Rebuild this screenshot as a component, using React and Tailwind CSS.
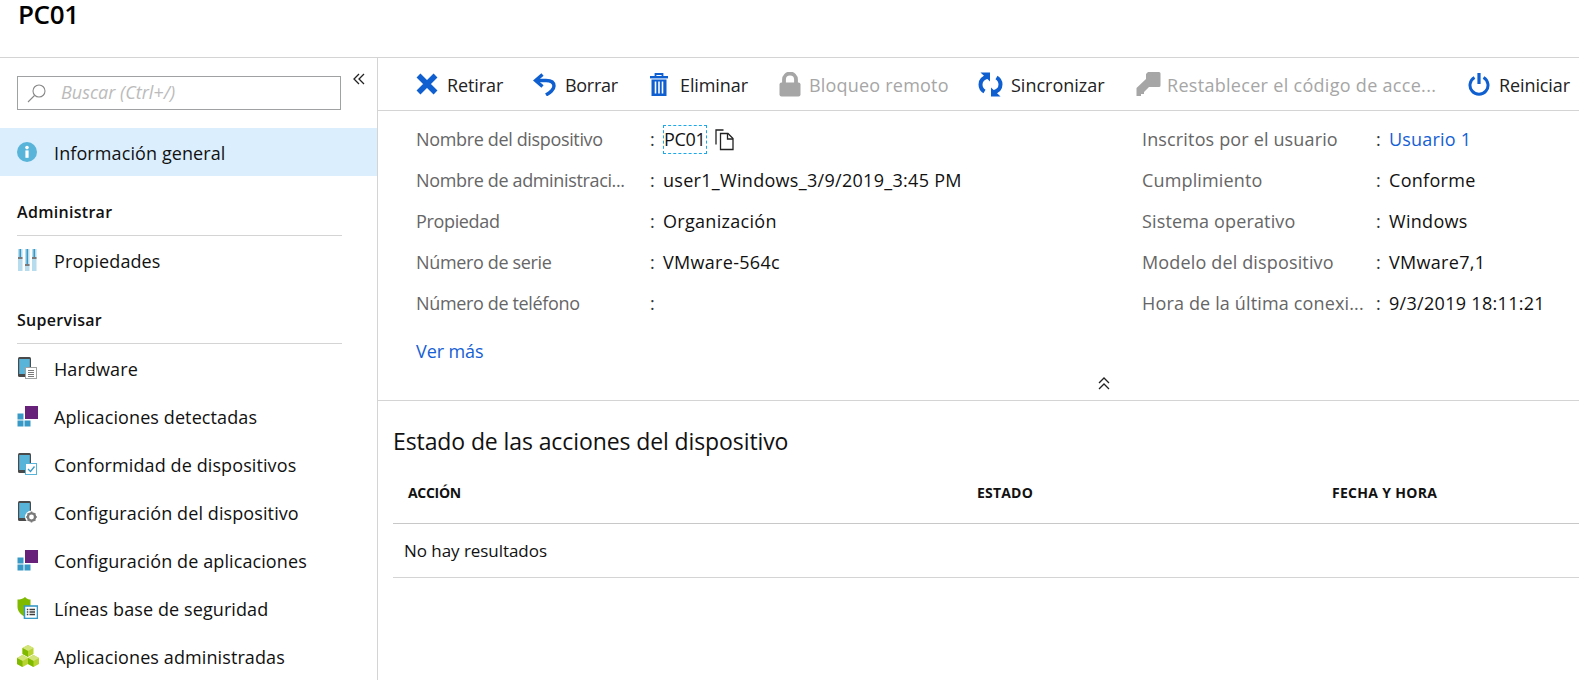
const font = { fontFamily: '"Open Sans", "Noto Sans", sans-serif' };

const IconInfo = () => (
  <svg width="20" height="20" viewBox="0 0 20 20">
    <circle cx="10" cy="10" r="10" fill="#59b4d9" />
    <rect x="8.4" y="8.4" width="3.2" height="7.4" fill="#fff" />
    <circle cx="10" cy="5.6" r="1.8" fill="#fff" />
  </svg>
);

const IconProps = () => (
  <svg width="20" height="22" viewBox="0 0 20 22">
    <rect x="1" y="0" width="4.5" height="22" fill="#b6dcee" />
    <rect x="8" y="0" width="4.5" height="22" fill="#b6dcee" />
    <rect x="15" y="0" width="4.5" height="22" fill="#b6dcee" />
    <rect x="2.5" y="0" width="1.5" height="8" fill="#3999c6" />
    <rect x="9.500" y="0" width="1.5" height="15" fill="#3999c6" />
    <rect x="16.500" y="0" width="1.5" height="8" fill="#3999c6" />
    <rect x="1" y="8" width="4.500" height="2" fill="#7a7a7a" />
    <rect x="8" y="15" width="4.500" height="2" fill="#7a7a7a" />
    <rect x="15" y="8" width="4.500" height="2" fill="#7a7a7a" />
  </svg>
);

const Phone = () => (
  <>
    <rect x="1" y="0" width="13" height="20" rx="1.5" fill="#4a4a4a" />
    <rect x="2.200" y="2" width="10.600" height="15" fill="#59b4d9" />
  </>
);

const IconHardware = () => (
  <svg width="20" height="22" viewBox="0 0 20 22">
    <Phone />
    <rect x="8.500" y="10.500" width="11" height="11" fill="#fff" stroke="#a0a1a2" />
    <path d="M11 13.500h6M11 15.500h6M11 17.500h6M11 19.500h6" stroke="#7a7a7a" />
  </svg>
);

const IconCheck = () => (
  <svg width="20" height="22" viewBox="0 0 20 22">
    <Phone />
    <rect x="8.500" y="10.500" width="11" height="11" fill="#fff" stroke="#59b4d9" />
    <path d="M11 16l2.500 2.500 4-5" fill="none" stroke="#3999c6" strokeWidth="1.300" />
  </svg>
);

const IconGear = () => (
  <svg width="21" height="22" viewBox="0 0 21 22">
    <Phone />
    <circle cx="14.500" cy="16" r="6.500" fill="#fff" />
    <circle cx="14.500" cy="16" r="3.600" fill="none" stroke="#7a7a7a" strokeWidth="2.400" />
    <path d="M14.500 10.600v2M14.500 19.400v2M9.100 16h2M17.900 16h2M10.700 12.200l1.400 1.400M16.900 18.400l1.400 1.400M10.700 19.800l1.400-1.400M16.900 13.600l1.400-1.400" stroke="#7a7a7a" strokeWidth="1.600" />
  </svg>
);

const IconApps = () => (
  <svg width="21" height="21" viewBox="0 0 21 21">
    <rect x="8" y="0" width="13" height="13" fill="#68217a" />
    <rect x="0.5" y="7.5" width="6" height="6" fill="#3999c6" />
    <rect x="0.5" y="14.5" width="6" height="6" fill="#3999c6" />
    <rect x="7.5" y="14.5" width="6" height="6" fill="#3999c6" />
  </svg>
);

const IconShield = () => (
  <svg width="21" height="22" viewBox="0 0 21 22">
    <path d="M8 0C6 1.800 3 2.600 0.500 2.600V10c0 4.500 3.500 7.500 7.500 10 2-1.200 4-2.600 5.500-4.400V2.600C11.500 2.600 10 1.800 8 0z" fill="#7fba00" />
    <rect x="7.500" y="9" width="13" height="12.500" fill="#fff" stroke="#3999c6" strokeWidth="1.600" />
    <path d="M9.800 12.500h1.500M9.800 15h1.500M9.800 17.500h1.500M12.500 12.500h5.500M12.500 15h5.500M12.500 17.500h5.500" stroke="#3e3e3e" strokeWidth="1.300" />
  </svg>
);

const Cube = ({ x, y }) => (
  <g transform={`translate(${x} ${y})`}>
    <path d="M5.500 0L11 3v6L5.500 12 0 9V3z" fill="#b8d432" />
    <path d="M0 3l5.500 3L11 3 5.500 0z" fill="#d3e57a" />
    <path d="M5.500 6v6L0 9V3z" fill="#7fba00" />
  </g>
);

const IconCubes = () => (
  <svg width="22" height="22" viewBox="0 0 22 22">
    <Cube x={5.5} y={0} />
    <Cube x={0} y={10} />
    <Cube x={11} y={10} />
  </svg>
);

const IconX = () => (
  <svg width="22" height="22" viewBox="0 0 22 22">
    <path d="M2.500 2.500l17 17M19.500 2.500l-17 17" stroke="#0f5fd0" strokeWidth="5.500" />
  </svg>
);

const IconUndo = () => (
  <svg width="23" height="23" viewBox="0 0 23 23" fill="none" stroke="#0f5fd0" strokeWidth="3.400">
    <path d="M9.500 1.500L2.500 7.500l7 6" />
    <path d="M3 7.500h10c4.500 0 8 1.500 8 5.500 0 4-4 6.500-8 9" />
  </svg>
);

const IconTrash = () => (
  <svg width="18" height="23" viewBox="0 0 18 23">
    <path d="M5.500 3V1h7v2" fill="none" stroke="#0f5fd0" strokeWidth="1.800" />
    <rect x="0" y="3" width="18" height="2.400" fill="#0f5fd0" />
    <path d="M1.500 6.500h15V23h-15z" fill="#0f5fd0" />
    <path d="M5.500 8.500v12M9 8.500v12M12.500 8.500v12" stroke="#fff" strokeWidth="1.600" />
  </svg>
);

const IconLock = () => (
  <svg width="22" height="25" viewBox="0 0 22 25">
    <path d="M5 11V7.500a6 6 0 0 1 12 0V11" fill="none" stroke="#a6a6a6" strokeWidth="3.800" />
    <rect x="0.500" y="10.500" width="21" height="14" rx="2" fill="#a6a6a6" />
  </svg>
);

const IconSync = () => (
  <svg width="25" height="25" viewBox="0 0 25 25">
    <path d="M10 4.500C6 5.500 2.500 8 2.500 12.500c0 3 1.500 5.500 4 7" fill="none" stroke="#0f5fd0" strokeWidth="4" />
    <path d="M2.500 0.500h9.500v9z" fill="#0f5fd0" />
    <path d="M15 20.500c4-1 7.500-3.500 7.500-8 0-3-1.500-5.500-4-7" fill="none" stroke="#0f5fd0" strokeWidth="4" />
    <path d="M22.500 24.500H13v-9z" fill="#0f5fd0" />
  </svg>
);

const IconKey = () => (
  <svg width="26" height="25" viewBox="0 0 26 25">
    <path d="M13 0h11a1.500 1.500 0 0 1 1.500 1.500v12a1.500 1.500 0 0 1-1.500 1.500H14l-5 5v2H6v2H1.500v-8L11 7V2z" fill="#a6a6a6" />
  </svg>
);

const IconPower = () => (
  <svg width="22" height="24" viewBox="0 0 22 24">
    <path d="M6.500 5.500a9 9 0 1 0 9 0" fill="none" stroke="#0f5fd0" strokeWidth="3" />
    <path d="M11 1v11" stroke="#0f5fd0" strokeWidth="3.200" />
  </svg>
);

const IconCopy = () => (
  <svg width="20" height="22" viewBox="0 0 20 22" fill="none" stroke="#222" strokeWidth="1.300">
    <path d="M1 15.500V1h7.500" />
    <path d="M5.500 4.500h7.500l5 5V20.500H5.500z" fill="#fff" />
    <path d="M12.500 4.500v5.500h5.500" />
  </svg>
);

const actions = [
  { label: "Retirar", icon: <IconX />, box: "w-[117px]", slot: "w-[31px]", track: "tracking-[-0.1px]" },
  { label: "Borrar", icon: <IconUndo />, box: "w-[117px]", slot: "w-[32px]", track: "tracking-[-0.3px]" },
  { label: "Eliminar", icon: <IconTrash />, box: "w-[129px]", slot: "w-[30px]", track: "tracking-[-0.1px]" },
  { label: "Bloqueo remoto", icon: <IconLock />, box: "w-[199px]", slot: "w-[30px]", track: "tracking-[0.2px]", off: true },
  { label: "Sincronizar", icon: <IconSync />, box: "w-[157px]", slot: "w-[33px]", track: "tracking-[0px]" },
  { label: "Restablecer el código de acce...", icon: <IconKey />, box: "w-[333px]", slot: "w-[32px]", track: "tracking-[0.3px]", off: true },
  { label: "Reiniciar", icon: <IconPower />, box: "w-[111px]", slot: "w-[31px]", track: "tracking-[-0.1px]" },
];

const leftRows = [
  ["Nombre del dispositivo", "PC01"],
  ["Nombre de administraci...", "user1_Windows_3/9/2019_3:45 PM"],
  ["Propiedad", "Organización"],
  ["Número de serie", "VMware-564c"],
  ["Número de teléfono", ""],
];

const rightRows = [
  ["Inscritos por el usuario", "Usuario 1"],
  ["Cumplimiento", "Conforme"],
  ["Sistema operativo", "Windows"],
  ["Modelo del dispositivo", "VMware7,1"],
  ["Hora de la última conexi...", "9/3/2019 18:11:21"],
];

const supervise = [
  ["Hardware", <IconHardware />],
  ["Aplicaciones detectadas", <IconApps />],
  ["Conformidad de dispositivos", <IconCheck />],
  ["Configuración del dispositivo", <IconGear />],
  ["Configuración de aplicaciones", <IconApps />],
  ["Líneas base de seguridad", <IconShield />],
  ["Aplicaciones administradas", <IconCubes />],
];

const NavItem = ({ label, icon }) => (
  <div className="flex h-12 items-center pl-[17px] text-[18px] tracking-[0.1px] text-[#111]">
    <span className="flex w-[37px] shrink-0">{icon}</span>
    <span className="pt-[2px]">{label}</span>
  </div>
);

const SectionTitle = ({ children }) => (
  <div className="mx-[17px] h-[60px] w-[325px] border-b border-[#d4d4d4] pt-[24px] text-[16px] leading-[24px] font-semibold tracking-[0.3px] text-[#111]">
    {children}
  </div>
);

const DetailRow = ({ label, value, labelTrack }) => {
  let valueNode = <span className="tracking-[0.3px] text-[#111]">{value}</span>;
  if (value === "PC01") {
    valueNode = (
      <span className="flex items-center gap-[8px]">
        <span className="border border-dashed border-[#19a8e8] tracking-[-0.3px] text-[#111]">PC01</span>
        <IconCopy />
      </span>
    );
  }
  if (value === "Usuario 1") {
    valueNode = <span className="tracking-[0.2px] text-[#1560d4]">{value}</span>;
  }
  return (
    <div className="flex h-[41px] items-center">
      <span className={`w-[234px] shrink-0 text-[#666] ${labelTrack}`}>{label}</span>
      <span className="w-[13px] shrink-0 text-[#333]">:</span>
      {valueNode}
    </div>
  );
};

export default function App() {
  return (
    <div className="h-[680px] w-[1579px] overflow-hidden bg-white" style={font}>
      <div className="h-[58px] border-b border-[#d4d4d4] pl-[18px]">
        <h1 className="text-[26px] leading-[29px] font-semibold tracking-[-0.4px] text-[#000]">PC01</h1>
      </div>

      <div className="flex h-[622px]">
        <aside className="w-[378px] shrink-0 border-r border-[#d4d4d4]">
          <div className="relative h-[70px] pt-[18px] pl-[17px]">
            <div className="flex h-[34px] w-[324px] items-center border border-[#a0a1a2] bg-white">
              <svg className="ml-[9px]" width="20" height="20" viewBox="0 0 20 20" fill="none" stroke="#888" strokeWidth="1.100">
                <circle cx="12" cy="8" r="6" />
                <path d="M7.500 12.500L1 19" />
              </svg>
              <span className="mb-[2px] ml-[14px] text-[18px] text-[#bbb] italic">Buscar (Ctrl+/)</span>
            </div>
            <svg className="absolute top-[15px] left-[353px]" width="12" height="12" viewBox="0 0 12 12" fill="none" stroke="#222" strokeWidth="1.300">
              <path d="M6 1L1 6l5 5M11 1L6 6l5 5" />
            </svg>
          </div>

          <div className="flex h-[48px] items-center bg-[#dbeefd] pl-[17px] text-[18px] tracking-[0.1px] text-[#111]">
            <span className="flex w-[37px]">
              <IconInfo />
            </span>
            <span className="pt-[2px]">Información general</span>
          </div>

          <SectionTitle>Administrar</SectionTitle>
          <NavItem label="Propiedades" icon={<IconProps />} />

          <SectionTitle>Supervisar</SectionTitle>
          {supervise.map(([label, icon]) => (
            <NavItem key={label} label={label} icon={icon} />
          ))}
        </aside>

        <main className="min-w-0 flex-1">
          <div className="flex h-[53px] items-center border-b border-[#d4d4d4] pl-[38px] text-[18px] whitespace-nowrap">
            {actions.map((a) => (
              <div key={a.label} className={`flex shrink-0 items-center ${a.box} ${a.track} ${a.off ? "text-[#a6a6a6]" : "text-[#222]"}`}>
                <span className={`flex shrink-0 ${a.slot}`}>{a.icon}</span>
                <span className="pt-[2px]">{a.label}</span>
              </div>
            ))}
          </div>

          <div className="h-[290px] border-b border-[#d4d4d4]">
            <div className="flex pt-[8px] pl-[38px] text-[18px]">
              <div className="w-[726px] shrink-0">
                {leftRows.map(([label, value]) => (
                  <DetailRow key={label} label={label} value={value} labelTrack="tracking-[-0.35px]" />
                ))}
              </div>
              <div>
                {rightRows.map(([label, value]) => (
                  <DetailRow key={label} label={label} value={value} labelTrack="tracking-[0.15px]" />
                ))}
              </div>
            </div>
            <div className="mt-[14px] pl-[38px] text-[18px] tracking-[-0.1px] text-[#1560d4]">Ver más</div>
            <div className="mt-[11px] pl-[720px]">
              <svg width="12" height="14" viewBox="0 0 12 14" fill="none" stroke="#222" strokeWidth="1.300">
                <path d="M1 7l5-5 5 5M1 13l5-5 5 5" />
              </svg>
            </div>
          </div>

          <div className="pl-[15px]">
            <h2 className="mt-[25px] text-[23px] leading-[30px] tracking-[-0.1px] text-[#111]">Estado de las acciones del dispositivo</h2>
            <div className="mt-[17px] flex h-[51px] items-center border-b border-[#c8c8c8] pb-[12px] text-[14px] font-bold text-[#111]">
              <span className="w-[584px] pl-[15px] tracking-[-0.3px]">ACCIÓN</span>
              <span className="w-[355px] tracking-[0.2px]">ESTADO</span>
              <span className="tracking-[0.3px]">FECHA Y HORA</span>
            </div>
            <div className="flex h-[54px] items-center border-b border-[#d4d4d4] pl-[11px] text-[17px] tracking-[-0.05px] text-[#111]">No hay resultados</div>
          </div>
        </main>
      </div>
    </div>
  );
}
